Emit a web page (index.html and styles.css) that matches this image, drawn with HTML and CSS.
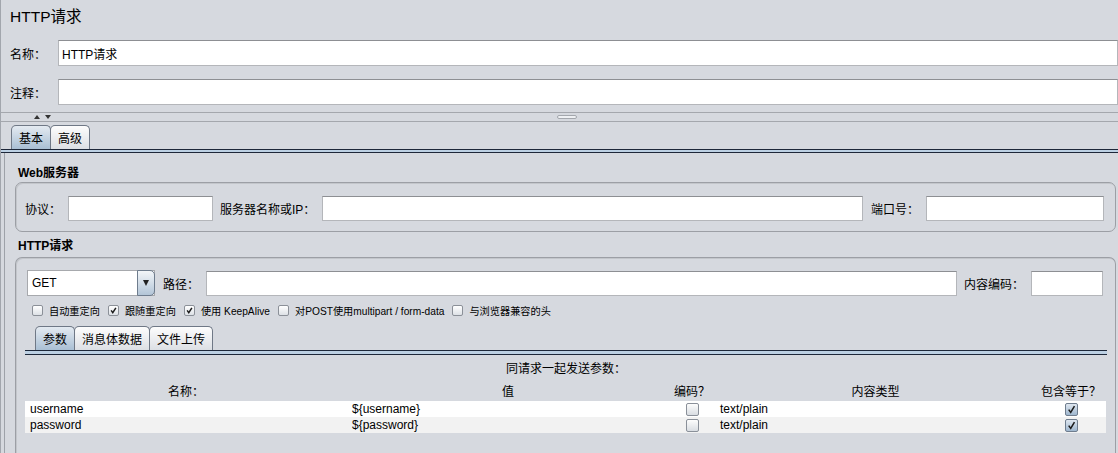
FILE: index.html
```html
<!DOCTYPE html>
<html lang="zh-CN">
<head>
  <meta charset="UTF-8">
  <meta name="viewport" content="width=device-width, initial-scale=1.0">
  <title>HTTP请求</title>
  <link rel="stylesheet" href="styles.css">
</head>
<body>
  <div class="window">
    <h1 class="title">HTTP请求</h1>

    <div class="field-row">
      <label for="name">名称：</label>
      <input type="text" id="name" class="text-input" value="HTTP请求">
    </div>
    <div class="field-row">
      <label for="comments">注释：</label>
      <input type="text" id="comments" class="text-input">
    </div>

    <!-- split pane divider -->
    <div class="splitter">
      <div class="split-arrows"><span class="arrow-up"></span><span class="arrow-down"></span></div>
      <span class="grip"></span>
      <div></div>
    </div>

    <div class="tabs outer-tabs">
      <button class="tab active">基本</button>
      <button class="tab">高级</button>
    </div>
    <div class="tab-line"></div>

    <div class="tab-body">
      <h3 class="group-title">Web服务器</h3>
      <div class="group server-group">
        <label class="lbl-protocol">协议：</label>
        <input type="text" class="text-input protocol-input">
        <label class="lbl-server">服务器名称或IP：</label>
        <input type="text" class="text-input server-input">
        <label class="lbl-port">端口号：</label>
        <input type="text" class="text-input port-input">
      </div>

      <h3 class="group-title">HTTP请求</h3>
      <div class="group request-group">
        <div class="request-row">
          <div class="combo">
            <span class="combo-value">GET</span>
            <span class="combo-btn"><span class="combo-arrow"></span></span>
          </div>
          <label class="lbl-path">路径：</label>
          <input type="text" class="text-input path-input">
          <label class="lbl-encoding">内容编码：</label>
          <input type="text" class="text-input encoding-input">
        </div>

        <div class="options">
          <label class="option"><span class="check"></span>自动重定向</label>
          <label class="option"><span class="check"><svg class="tick" viewBox="0 0 11 11"><path d="M2.6 5.4 L4.6 8.2 L8.4 2.2"/></svg></span>跟随重定向</label>
          <label class="option"><span class="check"><svg class="tick" viewBox="0 0 11 11"><path d="M2.6 5.4 L4.6 8.2 L8.4 2.2"/></svg></span>使用 KeepAlive</label>
          <label class="option"><span class="check"></span>对POST使用multipart / form-data</label>
          <label class="option"><span class="check"></span>与浏览器兼容的头</label>
        </div>

        <div class="inner">
          <div class="tabs inner-tabs">
            <button class="tab active">参数</button>
            <button class="tab">消息体数据</button>
            <button class="tab">文件上传</button>
          </div>
          <div class="inner-line"></div>

          <div class="params-title">同请求一起发送参数：</div>
          <table class="params-table">
            <colgroup>
              <col class="col-name">
              <col class="col-value">
              <col class="col-encode">
              <col class="col-type">
              <col class="col-include">
            </colgroup>
            <thead>
              <tr>
                <th>名称：</th>
                <th>值</th>
                <th>编码？</th>
                <th>内容类型</th>
                <th>包含等于？</th>
              </tr>
            </thead>
            <tbody>
              <tr>
                <td>username</td>
                <td>${username}</td>
                <td class="bool"><span class="cell-check"></span></td>
                <td>text/plain</td>
                <td class="bool"><span class="cell-check checked"><svg class="tick" viewBox="0 0 13 13"><path d="M3.2 6.6 L5.6 10 L10 2.6"/></svg></span></td>
              </tr>
              <tr class="alt">
                <td>password</td>
                <td>${password}</td>
                <td class="bool"><span class="cell-check"></span></td>
                <td>text/plain</td>
                <td class="bool"><span class="cell-check checked"><svg class="tick" viewBox="0 0 13 13"><path d="M3.2 6.6 L5.6 10 L10 2.6"/></svg></span></td>
              </tr>
            </tbody>
          </table>
        </div>
      </div>
    </div>
  </div>
</body>
</html>
```

FILE: styles.css
```css
* {
  box-sizing: border-box;
}

body {
  margin: 0;
  width: 1118px;
  height: 453px;
  overflow: hidden;
  background: #d6d9df;
  font-family: "Liberation Sans", "Noto Sans CJK SC", sans-serif;
  font-size: 12px;
  color: #000;
}

.window {
  height: 100%;
  border-left: 1px solid #a2a6ad;
}

.title {
  margin: 0;
  height: 27px;
  padding: 7px 0 0 9px;
  font-size: 15.5px;
  font-weight: normal;
  line-height: 20px;
}

/* Name / comment rows */
.field-row {
  display: flex;
  align-items: center;
  height: 26px;
  margin-top: 13px;
}

.field-row label {
  width: 57px;
  padding-left: 9px;
}

.field-row .text-input {
  flex: 1;
  height: 26px;
}

.text-input {
  height: 25px;
  padding: 0 3px;
  border: 1px solid #b4b6ba;
  border-top-color: #8d8f93;
  background: #fff;
  font: inherit;
  color: #000;
  outline: none;
}

/* Split pane divider */
.splitter {
  display: grid;
  grid-template-columns: 1fr auto 1fr;
  align-items: center;
  height: 10px;
  margin-top: 7px;
  border-top: 1px solid #a4a7ad;
  border-bottom: 1px solid #a4a7ad;
}

.split-arrows {
  display: flex;
  gap: 5px;
  padding-left: 33px;
}

.arrow-up {
  border-left: 3px solid transparent;
  border-right: 3px solid transparent;
  border-bottom: 4px solid #333;
}

.arrow-down {
  border-left: 3px solid transparent;
  border-right: 3px solid transparent;
  border-top: 4px solid #333;
}

.grip {
  width: 20px;
  height: 4px;
  margin-left: 14px;
  border: 1px solid #a3a7ad;
  border-radius: 2px;
  background: #eef0f3;
}

/* Tabs */
.tabs {
  display: flex;
}

.outer-tabs {
  padding: 3px 0 0 10px;
}

.inner-tabs {
  padding-left: 10px;
}

.tab {
  height: 24px;
  padding: 0 7px;
  margin-right: -1px;
  border: 1px solid #6f7886;
  border-bottom: none;
  border-radius: 5px 5px 0 0;
  background: linear-gradient(#fdfdfd, #dcdfe4);
  font: inherit;
  color: #000;
  cursor: pointer;
}

.tab.active {
  background: linear-gradient(#e4eaf1, #a9bfd4);
}

.tab-line,
.inner-line {
  height: 4px;
  border-top: 1px solid #1d2739;
  border-bottom: 1px solid #1d2739;
  background: #bcd0e3;
}

.inner-line {
  height: 5px;
}

.tab-body {
  height: 300px;
  margin-left: 3px;
  padding: 12px 2px 0 10px;
  border-left: 1px solid #9ea2a9;
}

/* Group boxes */
.group-title {
  margin: 0 0 1px;
  padding-left: 3px;
  font-size: 12px;
  font-weight: bold;
  line-height: 16px;
}

.group + .group-title {
  margin: 6px 0 3px;
}

.group {
  border: 1px solid #9c9fa5;
  border-radius: 7px;
  box-shadow: inset 1px 1px 0 #c3c6cb;
}

.server-group {
  display: flex;
  align-items: center;
  padding: 13px 11px 10px 9px;
}

.lbl-protocol {
  width: 43px;
}

.protocol-input {
  width: 145px;
}

.lbl-server {
  width: 102px;
  margin-left: 7px;
}

.server-input {
  flex: 1;
}

.lbl-port {
  width: 55px;
  margin-left: 8px;
}

.port-input {
  width: 178px;
}

.request-group {
  height: 220px;
  padding: 12px 8px 0 9px;
  border-bottom: none;
  border-radius: 7px 7px 0 0;
}

.request-row {
  display: flex;
  align-items: center;
  padding: 0 4px 0 2px;
}

.combo {
  display: flex;
  align-items: center;
  width: 128px;
  height: 26px;
  border: 1px solid #a7a9ad;
  background: #fff;
}

.combo-value {
  padding-left: 4px;
}

.combo-btn {
  display: flex;
  align-items: center;
  justify-content: center;
  width: 18px;
  height: 26px;
  margin: 0 -1px 0 auto;
  border: 1px solid #6e7c8d;
  border-radius: 0 5px 5px 0;
  background: linear-gradient(#f3f6f9, #b3c5d7);
}

.combo-arrow {
  border-left: 3px solid transparent;
  border-right: 3px solid transparent;
  border-top: 6px solid #222;
}

.lbl-path {
  width: 43px;
  margin-left: 8px;
}

.path-input {
  flex: 1;
}

.lbl-encoding {
  width: 67px;
  margin-left: 7px;
}

.encoding-input {
  width: 72px;
}

/* Checkbox options */
.options {
  display: flex;
  align-items: center;
  gap: 8px;
  height: 14px;
  margin-top: 7px;
  padding-left: 7px;
  font-size: 10.2px;
}

.option {
  display: flex;
  align-items: center;
  gap: 6px;
}

.check {
  display: inline-block;
  width: 11px;
  height: 11px;
  border: 1px solid #8b9098;
  border-radius: 2px;
  background: linear-gradient(#ffffff, #dde1e6);
}

.tick {
  display: block;
  width: 100%;
  height: 100%;
}

.tick path {
  fill: none;
  stroke: #1b1b1b;
  stroke-width: 1.8;
}

/* Parameters table */
.inner {
  margin-top: 9px;
}

.params-title {
  margin-top: 6px;
  line-height: 16px;
  text-align: center;
}

.params-table {
  width: 1081px;
  margin-top: 7px;
  border-collapse: collapse;
  table-layout: fixed;
}

.col-name { width: 322px; }
.col-value { width: 322px; }
.col-encode { width: 46px; }
.col-type { width: 321px; }
.col-include { width: 70px; }

.params-table th {
  padding: 0 0 1px;
  font-weight: normal;
  line-height: 16px;
  text-align: center;
}

.params-table td {
  height: 16px;
  padding: 0 5px;
  line-height: 16px;
  background: #fff;
  white-space: nowrap;
}

.params-table tr.alt td {
  background: #f2f2f2;
}

.params-table td.bool {
  padding: 0;
  text-align: center;
  background: #fff;
}

.cell-check {
  display: inline-block;
  width: 13px;
  height: 13px;
  vertical-align: middle;
  border: 1px solid #8a9099;
  border-radius: 2px;
  background: linear-gradient(#fdfdfd, #d9dde2);
}

.cell-check.checked {
  background: linear-gradient(#dfe7f0, #9fb7cf);
  border-color: #6f7d8e;
}
```
